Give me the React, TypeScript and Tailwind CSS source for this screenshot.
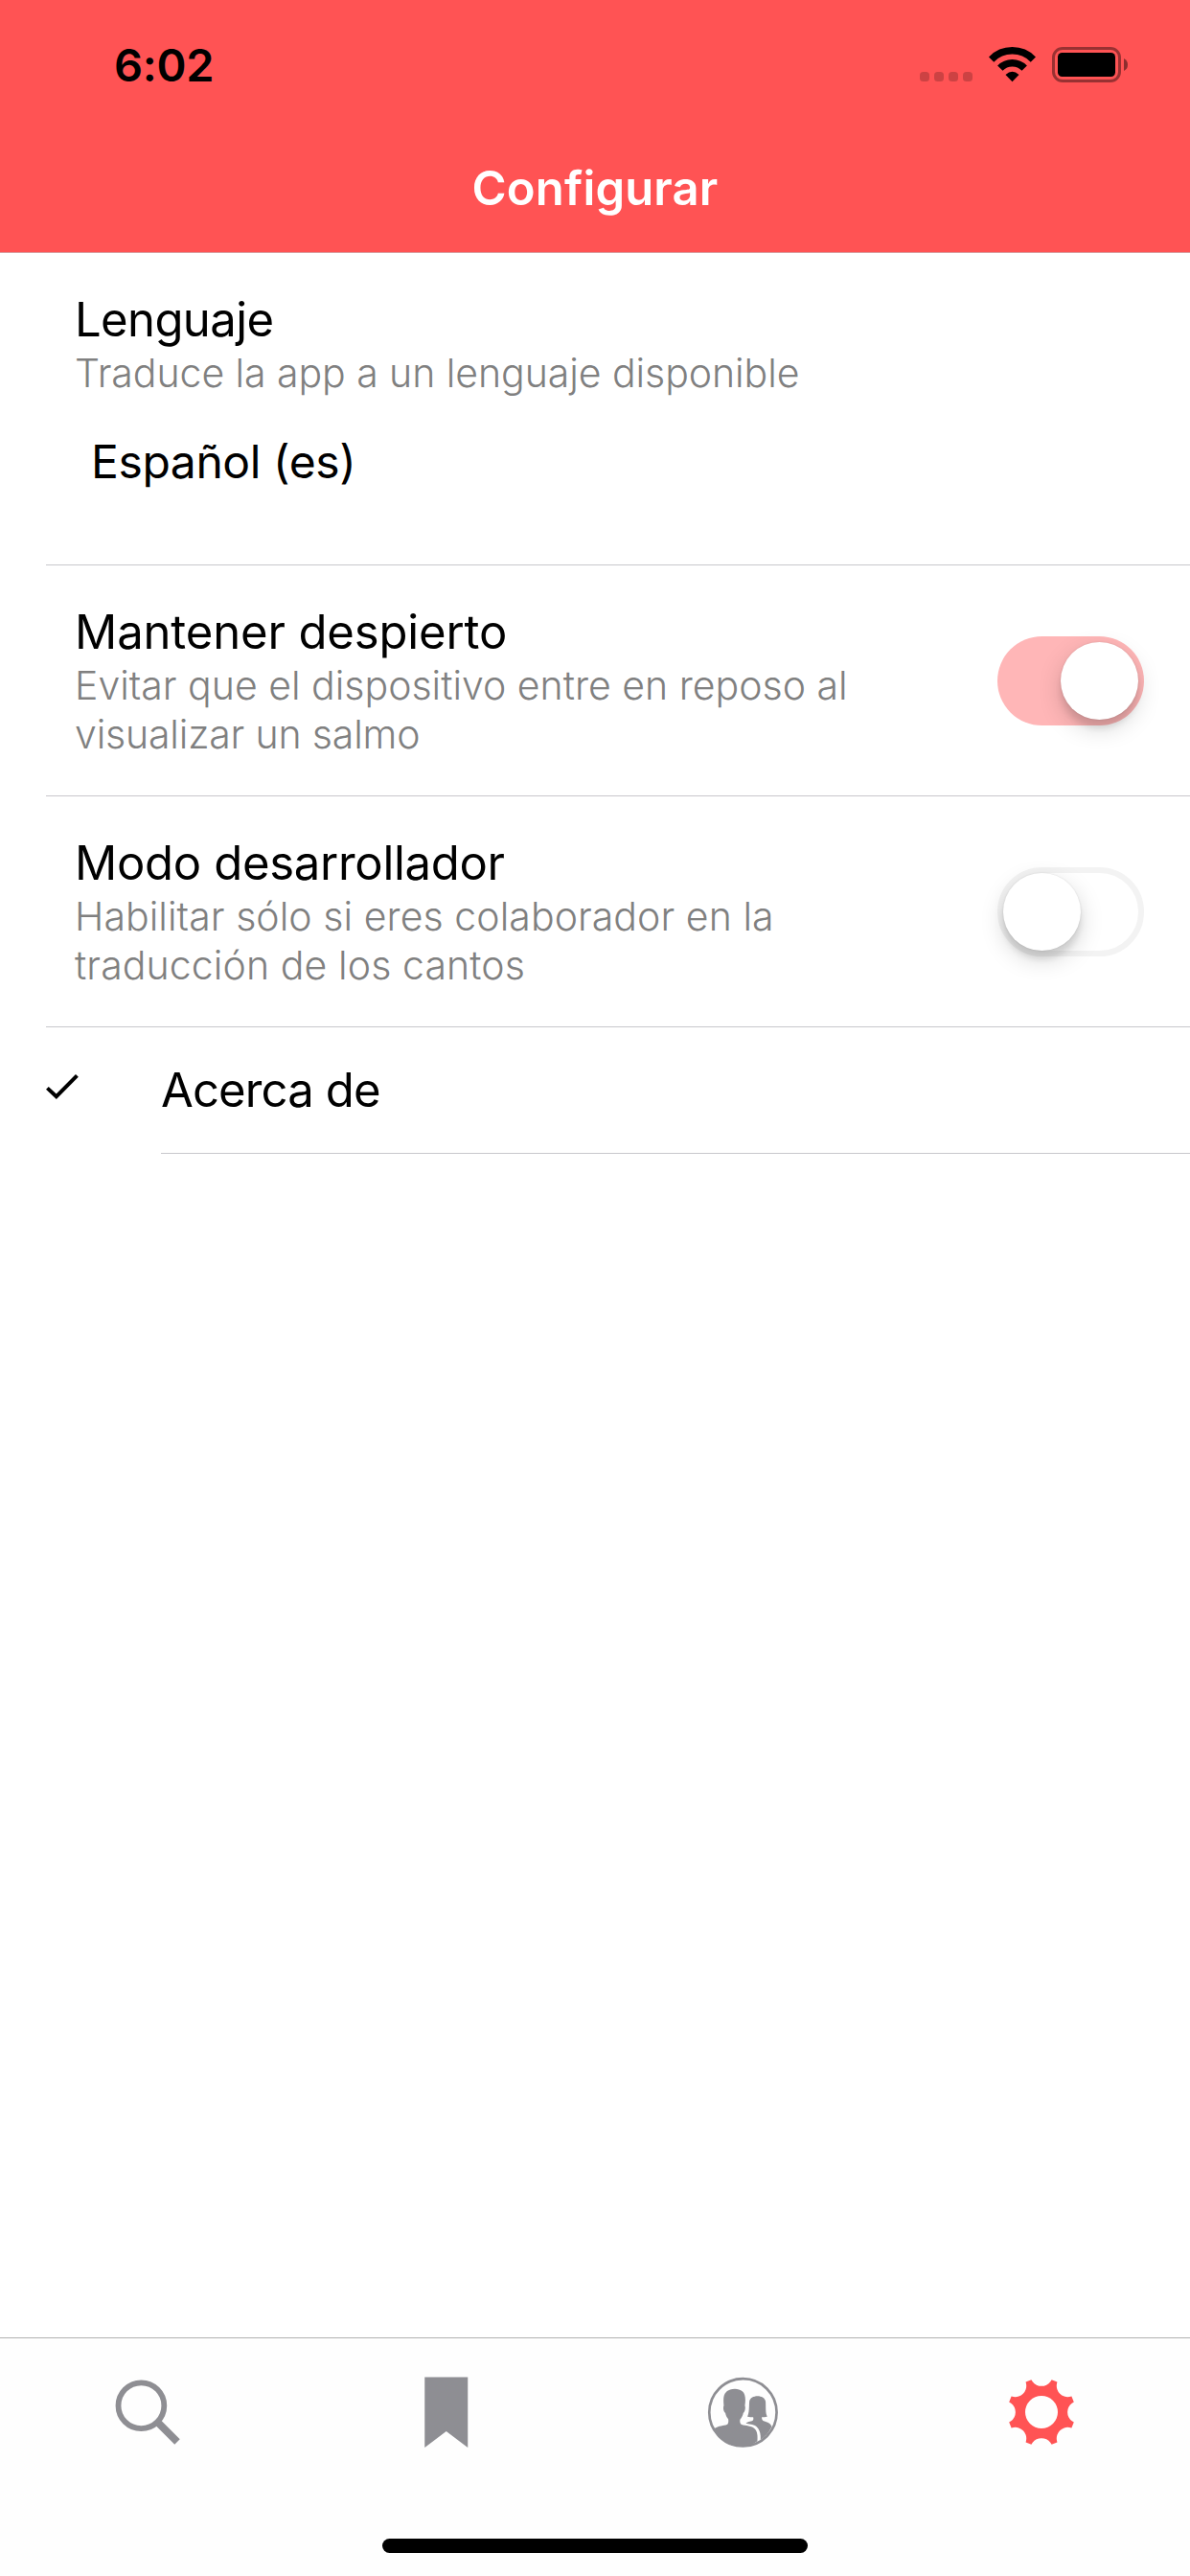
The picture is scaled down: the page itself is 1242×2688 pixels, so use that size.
import type { ReactNode } from "react";

function StatusBar() {
  return (
    <div className="flex h-[135px] items-center justify-between pr-[65px] pl-[119px]">
      <span className="text-[47px] leading-none font-semibold tracking-[-0.25px] text-black">6:02</span>
      <div className="flex h-[37px] items-start">
        <div className="mt-[26px] flex gap-[5px]">
          {[0, 1, 2, 3].map((dot) => (
            <span key={dot} className="size-[10px] rounded-[3.5px] bg-black/20" />
          ))}
        </div>
        <svg className="ml-[17px]" width="49" height="37" viewBox="0 0 49 37">
          <g fill="none" stroke="#000" strokeWidth="7.5">
            <path d="M2.6 13.1A30.5 30.5 0 0 1 46.4 13.1" />
            <path d="M11.8 22.1A17.6 17.6 0 0 1 37.2 22.1" />
          </g>
          <path d="M17.5 29Q24.5 22.4 31.5 29L24.5 36.2Z" fill="#000" />
        </svg>
        <svg className="ml-[17px]" width="79" height="37" viewBox="0 0 79 37">
          <rect x="1.5" y="1.5" width="69" height="34" rx="9.5" fill="none" stroke="#000" strokeOpacity=".4" strokeWidth="3" />
          <rect x="6" y="6" width="60" height="25" rx="4.5" fill="#000" />
          <path d="M75 12Q79 14 79 18.5Q79 23 75 25Z" fill="#000" fillOpacity=".45" />
        </svg>
      </div>
    </div>
  );
}

function Toggle({ on }: { on: boolean }) {
  return (
    <div
      className={
        on
          ? "flex h-[93px] w-[153px] shrink-0 justify-end rounded-full bg-[#ffb6b7] p-[6px]"
          : "flex h-[93px] w-[153px] shrink-0 rounded-full border-[6px] border-[#f3f3f3] bg-white"
      }
    >
      <span className="size-[81px] rounded-full bg-white shadow-[0_9px_24px_rgba(0,0,0,0.17),0_9px_6px_rgba(0,0,0,0.09),0_0_2px_rgba(0,0,0,0.12)]" />
    </div>
  );
}

const titleClass = "text-[49px] leading-[60px] text-black whitespace-nowrap";
const noteClass = "text-[41px] leading-[51px] font-light text-[#808080] whitespace-nowrap";

const TOOTH = Array.from({ length: 8 }, (_, i) => {
  const a = (i * Math.PI) / 4;
  const at = (x: number, y: number) =>
    `${(x * Math.cos(a) - y * Math.sin(a)).toFixed(2)} ${(x * Math.sin(a) + y * Math.cos(a)).toFixed(2)}`;
  return `${i ? "L" : "M"}${at(-10.6, -33.8)}L${at(-9.3, -31.8)}A11.6 11.6 0 0 0 ${at(9.3, -31.8)}L${at(10.6, -33.8)}`;
}).join("");

function Tab({ children }: { children: ReactNode }) {
  return (
    <button className="flex flex-1 justify-center pt-[22px]">
      <svg width="110" height="110" viewBox="0 0 110 110">
        {children}
      </svg>
    </button>
  );
}

export default function App() {
  return (
    <div className="flex h-[2688px] w-[1242px] flex-col overflow-hidden bg-white font-['Inter',sans-serif]">
      <header className="h-[264px] shrink-0 border-b border-[#d99b9d] bg-[#ff5354]">
        <StatusBar />
        <h1 className="text-center text-[49px] leading-[124px] font-semibold tracking-[0.15px] text-white">
          Configurar
        </h1>
      </header>

      <main className="flex-1 pl-[48px]">
        <section className="h-[326px] border-b border-[#c8c7cc] pt-[40px] pl-[30px]">
          <h2 className={`${titleClass} tracking-[-0.6px]`}>Lenguaje</h2>
          <p className={`${noteClass} tracking-[-0.06px]`}>Traduce la app a un lenguaje disponible</p>
          <p className="mt-[37px] pl-[17px] text-[48px] leading-[60px] tracking-[-0.4px]">Español (es)</p>
        </section>

        <section className="flex h-[241px] items-center justify-between border-b border-[#c8c7cc] pr-[48px] pl-[30px]">
          <div className="h-[162px] self-start pt-[40px]">
            <h2 className={`${titleClass} tracking-[-0.13px]`}>Mantener despierto</h2>
            <p className={noteClass}>Evitar que el dispositivo entre en reposo al</p>
            <p className={`${noteClass} tracking-[-0.17px]`}>visualizar un salmo</p>
          </div>
          <Toggle on />
        </section>

        <section className="flex h-[241px] items-center justify-between border-b border-[#c8c7cc] pr-[48px] pl-[30px]">
          <div className="h-[162px] self-start pt-[40px]">
            <h2 className={`${titleClass} tracking-[-0.3px]`}>Modo desarrollador</h2>
            <p className={`${noteClass} tracking-[0.06px]`}>Habilitar sólo si eres colaborador en la</p>
            <p className={`${noteClass} tracking-[0.1px]`}>traducción de los cantos</p>
          </div>
          <Toggle on={false} />
        </section>

        <section className="flex h-[132px]">
          <div className="w-[120px] pt-[48px]">
            <svg width="36" height="28" viewBox="0 0 36 28">
              <path d="M1.4 15.4L10.8 24.2L32.4 2.4" fill="none" stroke="#000" strokeWidth="4" />
            </svg>
          </div>
          <div className="flex flex-1 items-center border-b border-[#c8c7cc]">
            <h2 className={`${titleClass} tracking-[-0.85px]`}>Acerca de</h2>
          </div>
        </section>
      </main>

      <footer className="flex h-[249px] shrink-0 flex-col justify-between border-t border-[#b2b2b2] bg-[#fefefe] pb-[24px]">
        <nav className="flex">
          <Tab>
            <circle cx="47.4" cy="48.2" r="23.9" fill="none" stroke="#8e8e93" strokeWidth="5.8" />
            <path d="M65 66L85 86" stroke="#8e8e93" strokeWidth="7.8" />
          </Tab>
          <Tab>
            <path d="M32.25 18.5H77.25V92L54.75 75L32.25 92Z" fill="#8e8e93" />
          </Tab>
          <Tab>
            <g transform="translate(-1.25 -2) scale(.33333)">
              <circle cx="167" cy="172" r="105.5" fill="none" stroke="#8e8e93" strokeWidth="8" />
              <path
                fill="#8e8e93"
                d="M77 223C90 213 108 214 117 210C122 207 122 200 121 193C116 187 113 180 112 174C106 170 104 157 107 151C105 130 106 117 114 109C125 96 153 95 165 106C175 113 176 132 173 151C176 158 173 170 168 174C167 181 163 189 158 194C157 201 158 207 163 210C174 214 195 213 205 224C213 233 213 248 212 262C194 276 180 277 167 277C130 277 96 258 77 223Z"
              />
              <path
                fill="#8e8e93"
                d="M181 185C187 174 186 153 187 139C189 115 236 115 238 139C239 155 237 174 243 185C237 187 231 186 226 187C226 193 227 196 230 198C241 202 253 204 257 216C250 233 239 246 222 258C223 239 220 226 209 216C198 207 185 209 176 206C183 200 196 201 199 196C200 193 200 190 199 187C194 186 187 187 181 185Z"
              />
            </g>
          </Tab>
          <Tab>
            <path d={`${TOOTH}ZM-17 0A17 17 0 1 0 17 0A17 17 0 1 0 -17 0Z`} fill="#ff5354" fillRule="evenodd" transform="translate(55 55)" />
          </Tab>
        </nav>
        <div className="h-[15px] w-[444px] self-center rounded-full bg-black" />
      </footer>
    </div>
  );
}
